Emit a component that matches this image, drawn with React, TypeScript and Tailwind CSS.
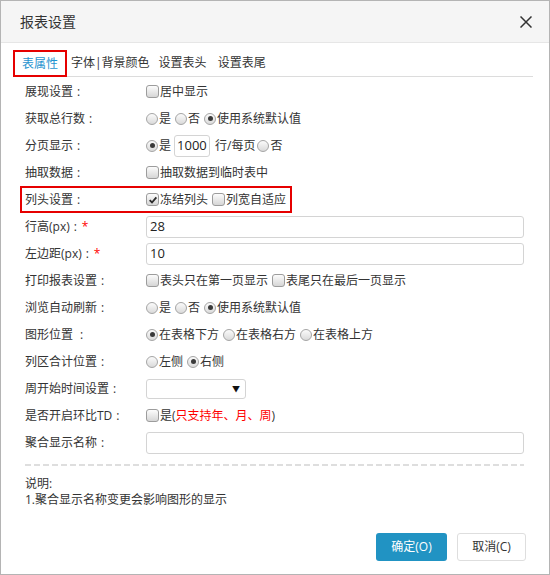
import React from "react";

const font = "font-['Open_Sans','Noto_Sans_CJK_SC',sans-serif]";

function Radio({ checked = false }: { checked?: boolean }) {
  return (
    <span className="inline-flex items-center justify-center w-[12px] h-[12px] rounded-full border border-[#a5a5a5] bg-linear-to-b from-[#fbfbfb] to-[#dadada] mr-[1px] shrink-0">
      {checked && <span className="w-[5px] h-[5px] rounded-full bg-[#3a3a3a]" />}
    </span>
  );
}

function Check({ checked = false }: { checked?: boolean }) {
  return (
    <span className="inline-flex items-center justify-center w-[13px] h-[13px] rounded-[3px] border border-[#9c9c9c] bg-linear-to-b from-[#fcfcfc] to-[#d6d6d6] mr-[1px] shrink-0">
      {checked && (
        <svg viewBox="0 0 12 12" className="w-[10px] h-[10px]">
          <path d="M2 6.2 L4.8 9 L10 2.8" fill="none" stroke="#2b2b2b" strokeWidth="2.2" />
        </svg>
      )}
    </span>
  );
}

function Opt({ children, type, checked }: { children: React.ReactNode; type: "radio" | "check"; checked?: boolean }) {
  return (
    <span className="inline-flex items-center mr-[4px]">
      {type === "radio" ? <Radio checked={checked} /> : <Check checked={checked} />}
      <span>{children}</span>
    </span>
  );
}

// label text with a centred colon, as in the reference
function Label({ text, star, gap = false }: { text: string; star?: boolean; gap?: boolean }) {
  return (
    <span className="inline-flex items-center">
      <span>{text}</span>
      <span className={gap ? "ml-[7px] mr-[5px]" : "ml-[4px] mr-[5px]"}>:</span>
      {star && <span className="text-[#f00]">*</span>}
    </span>
  );
}

function Row({ label, children }: { label: React.ReactNode; children: React.ReactNode }) {
  return (
    <div className="flex items-center h-[27px]">
      <div className="w-[121px] shrink-0">{label}</div>
      <div className="flex items-center flex-1">{children}</div>
    </div>
  );
}

function Field({ value = "" }: { value?: string }) {
  return (
    <div className="flex-1 h-[22px] border border-[#d4d4d4] rounded-[3px] px-[3px] flex items-center text-[13px] text-[#222]">
      {value}
    </div>
  );
}

export default function App() {
  return (
    <div className={`${font} w-[550px] h-[575px] bg-white border border-[#b4b4b4] flex flex-col text-[12px] text-[#333]`}>
      <div className="h-[42px] shrink-0 bg-[#f5f5f5] border-b border-[#e6e6e6] flex items-center justify-between pl-[19px] pr-[17px]">
        <span className="text-[14px] text-[#333]">报表设置</span>
        <svg viewBox="0 0 12 12" className="w-[12px] h-[12px]">
          <path d="M0.5 0.5 L11.5 11.5 M11.5 0.5 L0.5 11.5" stroke="#333" strokeWidth="1.5" />
        </svg>
      </div>

      <div className="mt-[7px] ml-[12px] mr-[16px] flex items-stretch h-[27px] border-b border-[#dcdcdc]">
        <div className="border-2 border-[#e60000] px-[7px] flex items-center text-[#1f94cf] -mb-[1px]">表属性</div>
        <div className="px-[4px] flex items-center">字体|背景颜色</div>
        <div className="px-[5px] flex items-center">设置表头</div>
        <div className="px-[6px] flex items-center">设置表尾</div>
      </div>

      <div className="pl-[24px] pr-[25px] pt-[1px]">
        <Row label={<Label text="展现设置" />}>
          <Opt type="check">居中显示</Opt>
        </Row>
        <Row label={<Label text="获取总行数" />}>
          <Opt type="radio">是</Opt>
          <Opt type="radio">否</Opt>
          <Opt type="radio" checked>使用系统默认值</Opt>
        </Row>
        <Row label={<Label text="分页显示" />}>
          <span className="inline-flex items-center">
            <Radio checked />
            <span>是</span>
          </span>
          <div className="ml-[3px] w-[36px] h-[22px] border border-[#d4d4d4] rounded-[3px] px-[2px] flex items-center text-[13px] text-[#222]">1000</div>
          <span className="ml-[5px] mr-[2px]">行/每页</span>
          <Opt type="radio">否</Opt>
        </Row>
        <Row label={<Label text="抽取数据" />}>
          <Opt type="check">抽取数据到临时表中</Opt>
        </Row>
        <div className="-ml-[5px] pl-[3px] pr-[4px] w-fit h-[27px] border-2 border-[#e60000] flex items-center">
          <div className="w-[121px] shrink-0">
            <Label text="列头设置" />
          </div>
          <Opt type="check" checked>冻结列头</Opt>
          <span className="inline-flex items-center">
            <Check />
            <span>列宽自适应</span>
          </span>
        </div>
        <Row label={<Label text="行高(px)" star />}>
          <Field value="28" />
        </Row>
        <Row label={<Label text="左边距(px)" star />}>
          <Field value="10" />
        </Row>
        <Row label={<Label text="打印报表设置" />}>
          <Opt type="check">表头只在第一页显示</Opt>
          <Opt type="check">表尾只在最后一页显示</Opt>
        </Row>
        <Row label={<Label text="浏览自动刷新" />}>
          <Opt type="radio">是</Opt>
          <Opt type="radio">否</Opt>
          <Opt type="radio" checked>使用系统默认值</Opt>
        </Row>
        <Row label={<Label text="图形位置" gap />}>
          <Opt type="radio" checked>在表格下方</Opt>
          <Opt type="radio">在表格右方</Opt>
          <Opt type="radio">在表格上方</Opt>
        </Row>
        <Row label={<Label text="列区合计位置" />}>
          <Opt type="radio">左侧</Opt>
          <Opt type="radio" checked>右侧</Opt>
        </Row>
        <Row label={<Label text="周开始时间设置" />}>
          <div className="w-[100px] h-[20px] border border-[#d4d4d4] rounded-[3px] flex items-center justify-end pr-[5px] text-[8px] text-[#111]">▼</div>
        </Row>
        <Row label={<Label text="是否开启环比TD" />}>
          <Check />
          <span>
            是(<span className="text-[#f00]">只支持年、月、周</span>)
          </span>
        </Row>
        <Row label={<Label text="聚合显示名称" />}>
          <Field />
        </Row>

        <div className="mt-[8px] h-[2px] bg-[repeating-linear-gradient(to_right,#dedede_0_6px,transparent_6px_9px)]" />

        <div className="mt-[10px] leading-[16px]">
          <div>说明:</div>
          <div>1.聚合显示名称变更会影响图形的显示</div>
        </div>
      </div>

      <div className="mt-auto flex justify-end gap-[10px] pr-[23px] pb-[13px]">
        <button className="w-[71px] h-[28px] rounded-[3px] bg-[#2193c3] text-white text-[12px]">确定(O)</button>
        <button className="w-[69px] h-[28px] rounded-[3px] bg-white border border-[#dedede] text-[#333] text-[12px]">取消(C)</button>
      </div>
    </div>
  );
}
